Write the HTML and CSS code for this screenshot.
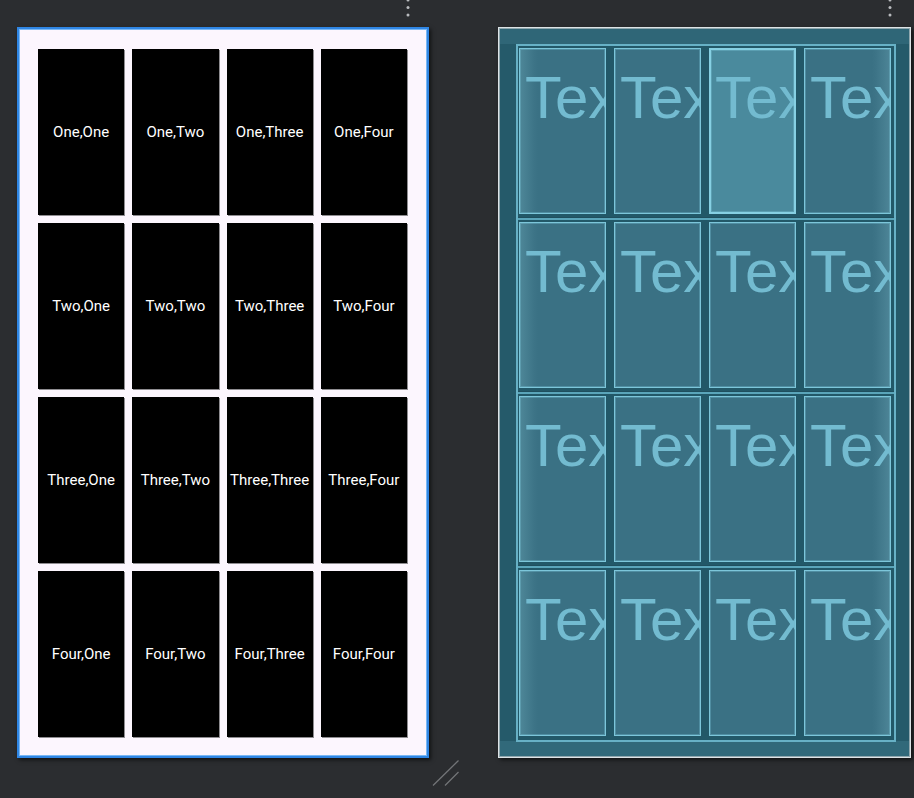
FILE: index.html
```html
<!DOCTYPE html>
<html>
<head>
<meta charset="utf-8">
<link rel="stylesheet" href="styles.css">
</head>
<body>
<div class="canvas">
  <div class="col col-left">
    <div class="menu">
      <svg class="dots" width="4" height="20" viewBox="0 0 4 20"><circle cx="2" cy="1" r="1.5"/><circle cx="2" cy="8.5" r="1.5"/><circle cx="2" cy="16" r="1.5"/></svg>
    </div>
    <div class="design">
      <div class="dgrid">
        <div class="dcell">One,One</div>
        <div class="dcell">One,Two</div>
        <div class="dcell">One,Three</div>
        <div class="dcell">One,Four</div>
        <div class="dcell">Two,One</div>
        <div class="dcell">Two,Two</div>
        <div class="dcell">Two,Three</div>
        <div class="dcell">Two,Four</div>
        <div class="dcell">Three,One</div>
        <div class="dcell">Three,Two</div>
        <div class="dcell">Three,Three</div>
        <div class="dcell">Three,Four</div>
        <div class="dcell">Four,One</div>
        <div class="dcell">Four,Two</div>
        <div class="dcell">Four,Three</div>
        <div class="dcell">Four,Four</div>
      </div>
    </div>
  </div>
  <div class="gutter">
    <svg class="handle" width="28" height="28" viewBox="0 0 28 28"><line x1="1" y1="26.5" x2="26.5" y2="1.5"/><line x1="13" y1="26.5" x2="26.5" y2="13"/></svg>
  </div>
  <div class="col col-right">
    <div class="menu">
      <svg class="dots" width="4" height="20" viewBox="0 0 4 20"><circle cx="2" cy="1" r="1.5"/><circle cx="2" cy="8.5" r="1.5"/><circle cx="2" cy="16" r="1.5"/></svg>
    </div>
    <div class="blueprint">
      <div class="bframe">
        <div class="brow">
          <div class="bcell first">TextView</div>
          <div class="bcell">TextView</div>
          <div class="bcell selected">TextView</div>
          <div class="bcell last">TextView</div>
        </div>
        <div class="brow">
          <div class="bcell first">TextView</div>
          <div class="bcell">TextView</div>
          <div class="bcell">TextView</div>
          <div class="bcell last">TextView</div>
        </div>
        <div class="brow">
          <div class="bcell first">TextView</div>
          <div class="bcell">TextView</div>
          <div class="bcell">TextView</div>
          <div class="bcell last">TextView</div>
        </div>
        <div class="brow">
          <div class="bcell first">TextView</div>
          <div class="bcell">TextView</div>
          <div class="bcell">TextView</div>
          <div class="bcell last">TextView</div>
        </div>
      </div>
    </div>
  </div>
</div>
</body>
</html>
```

FILE: styles.css
```css
html, body {
  margin: 0;
  padding: 0;
  background: #2b2d30;
}

.canvas {
  display: flex;
  width: 914px;
  height: 798px;
  box-sizing: border-box;
  padding-left: 17px;
  background: #2b2d30;
  overflow: hidden;
}

.col {
  display: flex;
  flex-direction: column;
}

.col-left {
  width: 412px;
}

.col-right {
  width: 413px;
}

.menu {
  height: 27px;
  display: flex;
  justify-content: flex-end;
  align-items: flex-start;
  padding-right: 19px;
  box-sizing: border-box;
}

.dots {
  display: block;
  margin-top: -1px;
  fill: #b9bbbe;
}

.gutter {
  width: 69px;
  display: flex;
  align-items: flex-end;
  padding-bottom: 11px;
  box-sizing: border-box;
}

.handle {
  display: block;
  margin-left: 3px;
  stroke: #737578;
  stroke-width: 1.3;
}

/* Design view */
.design {
  height: 731px;
  box-sizing: border-box;
  border: 2px solid #2f86e4;
  box-shadow: inset 0 0 0 1px #7ab8f5, 2px 2px 4px rgba(0, 0, 0, 0.6);
  background: #fcf6fe;
  padding: 20px 19px 19px 19px;
}

.dgrid {
  display: grid;
  grid-template-columns: repeat(4, 1fr);
  grid-template-rows: repeat(4, 166px);
  column-gap: 8px;
  row-gap: 8px;
  width: 369px;
}

.dcell {
  background: #000;
  box-shadow: 1px 1px 0 #8e8c90;
  color: #ffffff;
  font-family: Roboto, "Noto Sans", sans-serif;
  font-size: 15px;
  display: flex;
  align-items: center;
  justify-content: center;
  white-space: nowrap;
  overflow: hidden;
}

/* Blueprint view */
.blueprint {
  height: 731px;
  box-sizing: border-box;
  border: 1px solid #dde3e6;
  box-shadow: inset 0 0 0 1px #8fa7ae, 2px 2px 4px rgba(0, 0, 0, 0.6);
  background: linear-gradient(to bottom, #2f6677 0, #2f6677 16px, #255a6a 16px, #255a6a calc(100% - 16px), #31697a calc(100% - 16px));
  padding: 16px 14px 15px 17px;
}

.bframe {
  height: 698px;
  box-sizing: border-box;
  border: 2px solid #67b1c6;
  display: flex;
  flex-direction: column;
}

.brow {
  flex: 1;
  display: grid;
  grid-template-columns: repeat(4, 1fr);
  column-gap: 8px;
  padding: 2px 3px 4px 1px;
  border-bottom: 2px solid #5aa5ba;
  box-shadow: inset 0 -1px 0 #1f4f5e;
  background: #225868;
}

.brow:last-child {
  border-bottom: none;
  box-shadow: none;
}

.bcell {
  box-sizing: border-box;
  border: 1px solid #7cc6da;
  box-shadow: inset 0 0 0 1px rgba(124, 198, 218, 0.35);
  background: #3a7184;
  color: #73bbd0;
  font-family: "Liberation Sans", Arial, sans-serif;
  font-size: 60px;
  line-height: 69px;
  padding: 14px 0 0 5px;
  white-space: nowrap;
  overflow: hidden;
}

.bcell.first {
  background: linear-gradient(to right, #4e8798 0, #3d7487 14px, #3a7184 18px);
}

.bcell.last {
  background: linear-gradient(to left, #4d8597 0, #3d7487 14px, #3a7184 18px);
}

.bcell.selected {
  background: #4a8a9d;
  border: 2px solid #86d0e3;
  padding: 13px 0 0 4px;
}
```
